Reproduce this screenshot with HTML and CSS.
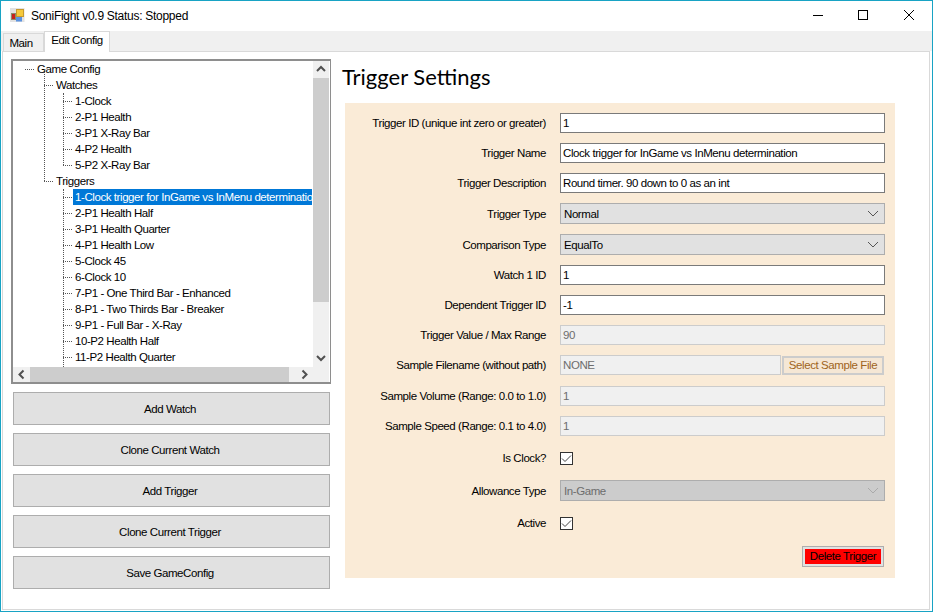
FILE: index.html

```html
<!DOCTYPE html>
<html>
<head>
<meta charset="utf-8">
<title>SoniFight v0.9 Status: Stopped</title>
<link rel="stylesheet" href="styles.css">
</head>
<body>
<div class="window">
    <div class="titlebar">
        <svg class="appicon" width="16" height="16" viewBox="0 0 16 16">
            <rect x="0" y="0" width="14.500" height="14" fill="#e2e2e2"/>
            <rect x="6.500" y="1.500" width="7" height="7" fill="#f5c93c" stroke="#c79a2e"/>
            <rect x="1.500" y="5.500" width="4" height="6" fill="#c8201c" stroke="#8a8a6a"/>
            <rect x="6" y="9" width="6" height="4.500" fill="#5a92e0"/>
        </svg>
        <span class="title">SoniFight v0.9 Status: Stopped</span>
        <div class="winbtns">
            <svg width="46" height="30" viewBox="0 0 46 30"><path d="M19 14.500h10" stroke="#000" fill="none"/></svg>
            <svg width="46" height="30" viewBox="0 0 46 30"><rect x="18.500" y="9.500" width="9" height="9" stroke="#000" fill="none"/></svg>
            <svg width="46" height="30" viewBox="0 0 46 30"><path d="M18 9l10 10M28 9l-10 10" stroke="#000" fill="none"/></svg>
        </div>
    </div>
    <div class="tabstrip">
        <div class="tab">Main</div>
        <div class="tab active">Edit Config</div>
    </div>
    <div class="panel">
        <div class="leftcol">
            <div class="treebox">
                <div class="tree">
                    <ul class="root">
                        <li><span>Game Config</span>
                            <ul class="lvl1">
                                <li class="watches"><span>Watches</span>
                                    <ul class="lvl2">
                                        <li><span>1-Clock</span></li>
                                        <li><span>2-P1 Health</span></li>
                                        <li><span>3-P1 X-Ray Bar</span></li>
                                        <li><span>4-P2 Health</span></li>
                                        <li><span>5-P2 X-Ray Bar</span></li>
                                    </ul>
                                </li>
                                <li class="triggers"><span>Triggers</span>
                                    <ul class="lvl2 open">
                                        <li><span class="selected">1-Clock trigger for InGame vs InMenu determination</span></li>
                                        <li><span>2-P1 Health Half</span></li>
                                        <li><span>3-P1 Health Quarter</span></li>
                                        <li><span>4-P1 Health Low</span></li>
                                        <li><span>5-Clock 45</span></li>
                                        <li><span>6-Clock 10</span></li>
                                        <li><span>7-P1 - One Third Bar - Enhanced</span></li>
                                        <li><span>8-P1 - Two Thirds Bar - Breaker</span></li>
                                        <li><span>9-P1 - Full Bar - X-Ray</span></li>
                                        <li><span>10-P2 Health Half</span></li>
                                        <li><span>11-P2 Health Quarter</span></li>
                                    </ul>
                                </li>
                            </ul>
                        </li>
                    </ul>
                </div>
                <div class="vscroll">
                    <svg class="arrow" width="16" height="17" viewBox="0 0 16 17"><path d="M4 10l4-4 4 4" stroke="#505050" stroke-width="2" fill="none"/></svg>
                    <div class="vthumb"></div>
                    <svg class="arrow vdown" width="16" height="18" viewBox="0 0 16 18"><path d="M4 7l4 4 4-4" stroke="#505050" stroke-width="2" fill="none"/></svg>
                </div>
                <div class="hscroll">
                    <svg class="arrow" width="17" height="15" viewBox="0 0 17 15"><path d="M10.500 3.500l-4 4 4 4" stroke="#505050" stroke-width="2" fill="none"/></svg>
                    <div class="hthumb"></div>
                    <svg class="arrow hright" width="17" height="15" viewBox="0 0 17 15"><path d="M6.500 3.500l4 4-4 4" stroke="#505050" stroke-width="2" fill="none"/></svg>
                </div>
                <div class="corner"></div>
            </div>
            <div class="bigbtn">Add Watch</div>
            <div class="bigbtn">Clone Current Watch</div>
            <div class="bigbtn">Add Trigger</div>
            <div class="bigbtn">Clone Current Trigger</div>
            <div class="bigbtn">Save GameConfig</div>
        </div>
        <div class="rightcol">
            <h1>Trigger Settings</h1>
            <div class="form">
                <div class="row"><label>Trigger ID (unique int zero or greater)</label><div class="input">1</div></div>
                <div class="row"><label>Trigger Name</label><div class="input">Clock trigger for InGame vs InMenu determination</div></div>
                <div class="row"><label>Trigger Description</label><div class="input">Round timer. 90 down to 0 as an int</div></div>
                <div class="row"><label>Trigger Type</label><div class="select">Normal<svg width="12" height="7" viewBox="0 0 12 7"><path d="M1 1l5 5 5-5" stroke="#555" fill="none"/></svg></div></div>
                <div class="row"><label>Comparison Type</label><div class="select">EqualTo<svg width="12" height="7" viewBox="0 0 12 7"><path d="M1 1l5 5 5-5" stroke="#555" fill="none"/></svg></div></div>
                <div class="row"><label>Watch 1 ID</label><div class="input">1</div></div>
                <div class="row"><label>Dependent Trigger ID</label><div class="input">-1</div></div>
                <div class="row"><label>Trigger Value / Max Range</label><div class="input off">90</div></div>
                <div class="row tall"><label>Sample Filename (without path)</label><div class="input off short">NONE</div><div class="filebtn">Select Sample File</div></div>
                <div class="row"><label>Sample Volume (Range: 0.0 to 1.0)</label><div class="input off">1</div></div>
                <div class="row wide"><label>Sample Speed (Range: 0.1 to 4.0)</label><div class="input off">1</div></div>
                <div class="row wide"><label>Is Clock?</label><div class="check"><svg width="11" height="9" viewBox="0 0 11 9"><path d="M1 4.500l3 3 6-6" stroke="#444" fill="none"/></svg></div></div>
                <div class="row wide"><label>Allowance Type</label><div class="select dis">In-Game<svg width="12" height="7" viewBox="0 0 12 7"><path d="M1 1l5 5 5-5" stroke="#aaa" fill="none"/></svg></div></div>
                <div class="row"><label>Active</label><div class="check"><svg width="11" height="9" viewBox="0 0 11 9"><path d="M1 4.500l3 3 6-6" stroke="#444" fill="none"/></svg></div></div>
                <div class="delrow"><div class="delbtn"><span>Delete Trigger</span></div></div>
            </div>
        </div>
    </div>
</div>
</body>
</html>
```

FILE: styles.css

```css
html,body{margin:0;padding:0;}
body{width:933px;height:612px;overflow:hidden;background:#fff;font:11.5px/16px "Liberation Sans",Arial,sans-serif;letter-spacing:-.42px;color:#000;}
ul{margin:0;padding:0;list-style:none;}
.window{box-sizing:border-box;width:933px;height:612px;border:1px solid #18a3c4;display:flex;flex-direction:column;}

.titlebar{height:30px;display:flex;align-items:center;padding-left:9px;flex:none;}
.appicon{flex:none;}
.title{margin-left:5px;font-size:12px;letter-spacing:-.28px;}
.winbtns{margin-left:auto;display:flex;}
.winbtns svg{display:block;}

.tabstrip{height:20px;background:#f0f0f0;display:flex;align-items:flex-end;padding-left:2px;flex:none;position:relative;z-index:1;}
.tab{box-sizing:border-box;height:18px;width:41px;border:1px solid #d9d9d9;border-bottom:0;padding-right:5px;text-align:center;line-height:18px;background:#f0f0f0;}
.tab.active{height:21px;width:66px;background:#fff;margin-bottom:-1px;padding-right:0;line-height:17px;}

.panel{flex:1;margin:0 2px 1px 1px;border:1px solid #d9d9d9;display:flex;background:#fff;min-height:0;}
.leftcol{width:327px;flex:none;padding:7px 0 0 8px;box-sizing:border-box;}
.treebox{box-sizing:border-box;width:320px;height:325px;border:1px solid #8e8e8e;border-width:2px 1px 2px 2px;position:relative;display:grid;grid-template-columns:300px 16px;grid-template-rows:306px 15px;}
.tree{overflow:hidden;position:relative;}

/* tree lines are dotted borders on pseudo elements */
.tree li{position:relative;white-space:nowrap;}
.tree span{display:inline-block;vertical-align:top;height:16px;line-height:16px;padding:0 2px;}
.root{padding:0 0 0 22px;}
.root>li::before{content:"";position:absolute;left:-10px;top:8px;width:9px;border-top:1px dotted #555;}
.lvl1{padding-left:19px;}
.lvl1>li::before{content:"";position:absolute;left:-10px;top:8px;width:9px;border-top:1px dotted #555;}
.lvl1>.watches::after{content:"";position:absolute;left:-10px;top:-8px;height:112px;border-left:1px dotted #555;}
.lvl2{padding-left:19px;position:relative;}
.lvl2>li::before{content:"";position:absolute;left:-10px;top:8px;width:9px;border-top:1px dotted #555;}
.lvl2::after{content:"";position:absolute;left:9px;top:0;bottom:8px;border-left:1px dotted #555;}
.lvl2.open::after{bottom:-8px;}
.selected{background:#0078d7;color:#fff;width:235px;overflow:hidden;}

.vscroll{background:#f0f0f0;display:flex;flex-direction:column;}
.vthumb{height:224px;background:#cdcdcd;}
.vdown{margin-top:auto;}
.hscroll{background:#f0f0f0;display:flex;}
.hthumb{width:259px;background:#cdcdcd;}
.hright{margin-left:auto;}
.arrow{display:block;flex:none;}
.corner{background:#f0f0f0;}

.bigbtn{box-sizing:border-box;width:317px;height:33px;margin:8px 0 0 2px;padding-right:3px;background:#e1e1e1;border:1px solid #adadad;text-align:center;line-height:32px;}

.rightcol{flex:1;padding:0 0 0 12px;}
h1{margin:13px 0 0;font:400 22px/24px Lato,sans-serif;letter-spacing:0;}
.form{box-sizing:border-box;width:550px;height:475px;margin:14px 0 0 3px;background:#faebd7;padding-top:10px;}
.row{display:flex;align-items:center;margin-bottom:10px;min-height:20px;}
.row label{width:201px;text-align:right;margin-right:14px;flex:none;white-space:nowrap;}
.input{box-sizing:border-box;width:325px;height:20px;border:1px solid #7a7a7a;background:#fff;line-height:18px;padding-left:2px;white-space:nowrap;overflow:hidden;}
.input.off{background:#f0f0f0;border-color:#ccc;color:#6d6d6d;}
.input.short{width:221px;}
.select{box-sizing:border-box;width:325px;height:21px;border:1px solid #adadad;background:#e1e1e1;line-height:20px;padding:0 3px;display:flex;justify-content:space-between;align-items:center;}
.select.dis{background:#ccc;color:#6d6d6d;}
.select svg{margin-right:2px;flex:none;}
.filebtn{box-sizing:border-box;width:102px;height:19px;margin-left:1px;border:2px solid #ccc;background:#f5e7d5;color:#a0641c;text-align:center;line-height:15px;white-space:nowrap;}
.tall{margin-bottom:11px;}
.wide{margin-bottom:12px;}
.check{box-sizing:border-box;width:13px;height:13px;border:1px solid #333;background:#fff;display:flex;align-items:center;justify-content:center;}
.check svg{display:block;}
.delrow{display:flex;justify-content:flex-end;padding-right:11px;margin-top:13px;}
.delbtn{box-sizing:border-box;width:82px;height:21px;border:1px solid #adadad;background:#e1e1e1;padding:2px;white-space:nowrap;}
.delbtn span{display:block;height:15px;background:#ff0000;text-align:center;line-height:15px;}
```
